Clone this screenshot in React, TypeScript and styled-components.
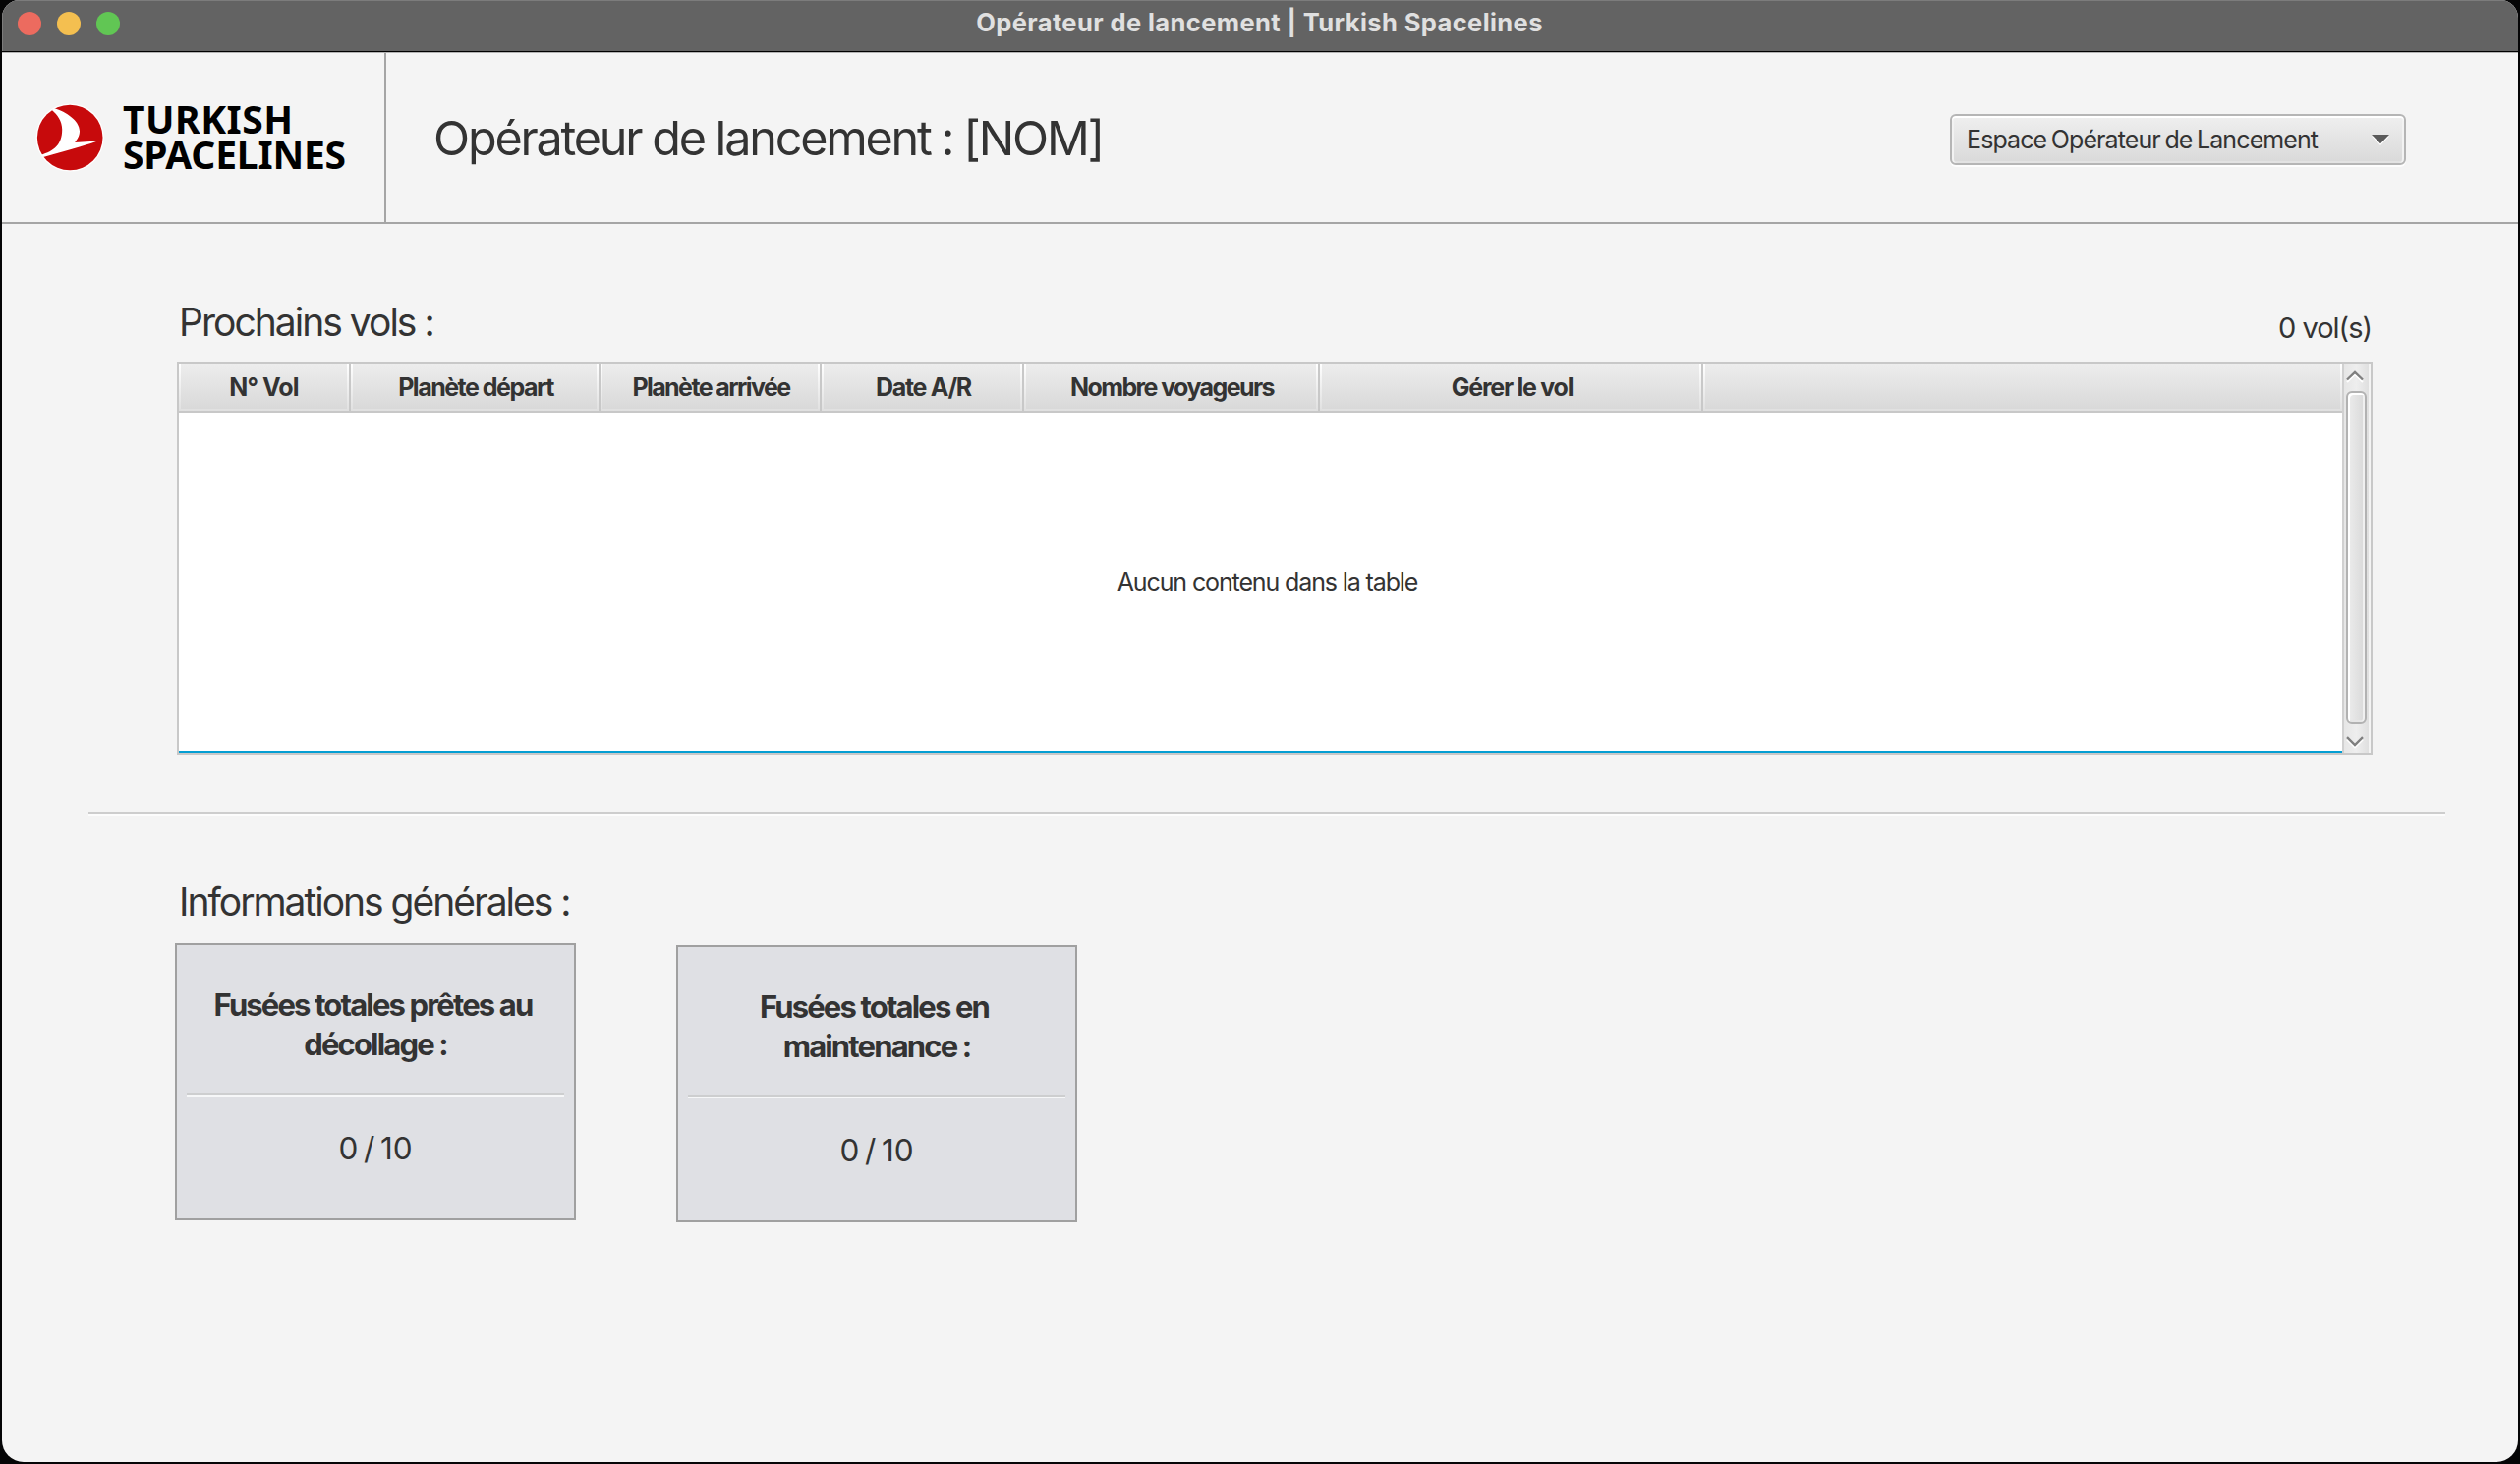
import React from "react";
import styled, { createGlobalStyle } from "styled-components";

const GlobalStyle = createGlobalStyle`
  * { box-sizing: border-box; }
  html, body { margin: 0; padding: 0; background: #050506; overflow: hidden; }
  body { font-family: Inter, "Liberation Sans", sans-serif; color: #333333; }
`;

const Desktop = styled.div`
  width: 2564px;
  height: 1490px;
  padding: 0 2px 2px;
  background: #050506;
`;

const Window = styled.div`
  display: flex;
  flex-direction: column;
  height: 1488px;
  border-radius: 18px 18px 22px 22px;
  overflow: hidden;
  background: #f4f4f4;
`;

const TitleBar = styled.div`
  display: grid;
  grid-template-columns: 1fr auto 1fr;
  height: 54px;
  padding: 0 17px 0 16px;
  background: #636363;
  border-bottom: 1px solid #b4b4b4;
  box-shadow: inset 0 -1px 0 #000, inset 1px 1px 0 #7c7c7c;
`;

const Lights = styled.div`
  display: flex;
  gap: 16px;
  padding-top: 12px;
`;

const Light = styled.span<{ $color: string }>`
  width: 24px;
  height: 24px;
  border-radius: 50%;
  background: ${(p) => p.$color};
`;

const WindowTitle = styled.div`
  font-size: 25.5px;
  font-weight: 700;
  line-height: 46px;
  letter-spacing: 0.4px;
  color: #e0e0e0;
  white-space: nowrap;
`;

const Header = styled.header`
  display: flex;
  height: 174px;
  border-bottom: 2px solid #a5a5a5;
`;

const Brand = styled.div`
  display: flex;
  align-items: center;
  gap: 19px;
  width: 391px;
  padding-left: 34px;
  border-right: 2px solid #a5a5a5;
`;

const BrandMark = styled.svg`
  flex: none;
  width: 70px;
  height: 70px;
`;

const BrandName = styled.div`
  display: flex;
  flex-direction: column;
  padding-bottom: 3px;
  font-family: "Noto Sans", "Open Sans", sans-serif;
  font-size: 39px;
  font-weight: 700;
  line-height: 36px;
  color: #000;
`;

const BrandLine = styled.span<{ $tracking: number }>`
  letter-spacing: ${(p) => p.$tracking}px;
`;

const PageTitle = styled.h1`
  flex: 1;
  margin: 0;
  padding: 1px 0 0 48px;
  font-size: 48.5px;
  font-weight: 400;
  line-height: 172px;
  letter-spacing: -2.2px;
  word-spacing: -0.6px;
  white-space: nowrap;
`;

const ComboBox = styled.button`
  display: flex;
  align-items: center;
  justify-content: space-between;
  width: 464px;
  height: 52px;
  margin: 62px 114px 0 0;
  padding: 1px 15px 1px 15px;
  border: 2px solid #b5b5b5;
  border-radius: 6px;
  background: linear-gradient(#efefef, #d9d9d9);
  box-shadow: inset 0 2px 0 #ffffff, inset 2px 0 0 #f2f2f2, inset -2px 0 0 #f2f2f2,
    inset 0 -2px 0 #e2e2e2, 0 2px 0 #fdfdfd;
  font-family: inherit;
  font-size: 25px;
  letter-spacing: -0.9px;
  word-spacing: -1.6px;
  color: #333333;
  white-space: nowrap;
`;

const ComboArrow = styled.svg`
  width: 18px;
  height: 12px;
`;

const Content = styled.main`
  display: flex;
  flex-direction: column;
  padding: 0 148px 0 178px;
`;

const SectionHead = styled.div<{ $height: number }>`
  display: flex;
  align-items: flex-end;
  justify-content: space-between;
  height: ${(p) => p.$height}px;
  padding: 0 1px 0 2px;
`;

const SectionTitle = styled.h2<{ $line: number; $tracking: number }>`
  margin: 0;
  font-size: 39px;
  font-weight: 400;
  line-height: ${(p) => p.$line}px;
  letter-spacing: ${(p) => p.$tracking}px;
  white-space: nowrap;
`;

const FlightCount = styled.span`
  font-size: 29px;
  line-height: 69px;
  letter-spacing: -1.01px;
`;

const Table = styled.div`
  display: flex;
  width: 2234px;
  height: 400px;
  border: 2px solid #c8c8c8;
  background: #ffffff;
`;

const TableMain = styled.div`
  display: flex;
  flex: 1;
  flex-direction: column;
  border-bottom: 2px solid #039ed3;
`;

const TableHead = styled.div`
  display: flex;
  height: 50px;
  border-bottom: 2px solid #c8c8c8;
`;

const HeadCell = styled.div<{ $width?: number; $tracking?: number }>`
  ${(p) => (p.$width ? `flex: none; width: ${p.$width}px;` : "flex: 1;")}
  display: flex;
  border-right: ${(p) => (p.$width ? "2px solid #c8c8c8" : "none")};
  letter-spacing: ${(p) => p.$tracking ?? 0}px;
`;

const HeadLabel = styled.div<{ $shift?: number }>`
  flex: 1;
  padding-left: ${(p) => p.$shift ?? 0}px;
  border: 2px solid transparent;
  border-top: none;
  background: linear-gradient(#ededed, #d9d9d9) padding-box,
    linear-gradient(#ffffff, #e0e0e0) border-box;
  font-size: 25px;
  font-weight: 700;
  line-height: 48px;
  text-align: center;
  white-space: nowrap;
`;

const Placeholder = styled.div`
  display: flex;
  flex: 1;
  align-items: center;
  justify-content: center;
  padding-left: 14px;
  font-size: 25px;
  letter-spacing: -1.12px;
`;

const ScrollBar = styled.div`
  display: flex;
  flex: none;
  flex-direction: column;
  align-items: flex-start;
  width: 29px;
  padding: 7px 0 4px 2px;
  border-left: 2px solid #d0d0d0;
  border-right: 2px solid #f4f4f4;
  background: linear-gradient(to right, #e6e6e6, #eeeeee 50%, #dfdfdf);
`;

const ScrollArrow = styled.svg`
  flex: none;
  width: 18px;
  height: 13px;
`;

const ScrollThumb = styled.div`
  flex: 1;
  width: 21px;
  margin: 8px 0 12px;
  border: 2px solid #b2b2b2;
  border-radius: 6px;
  background: linear-gradient(to right, #ececec, #d9d9d9);
  box-shadow: inset 2px 2px 0 #ffffff, inset -2px 0 0 #f0f0f0, inset 0 -2px 0 #e6e6e6;
`;

const Divider = styled.div`
  width: 2398px;
  height: 4px;
  margin: 58px 0 0 -90px;
  border-top: 2px solid #cdcdcd;
  border-bottom: 2px solid #fcfcfc;
`;

const Cards = styled.div`
  display: flex;
  gap: 102px;
  margin-left: -2px;
`;

const Card = styled.section<{ $drop: number }>`
  display: flex;
  flex-direction: column;
  width: 408px;
  height: 282px;
  margin-top: ${(p) => p.$drop}px;
  padding: 41px 10px 0;
  border: 2px solid #a0a0a0;
  background: #dfe0e4;
  text-align: center;
`;

const CardTitle = styled.h3`
  margin: 0;
  font-size: 31px;
  font-weight: 700;
  line-height: 40px;
  text-indent: -5px;
  letter-spacing: -1.84px;
`;

const CardRule = styled.div`
  height: 4px;
  margin-top: 29px;
  border-top: 2px solid #cdcecf;
  border-bottom: 2px solid #f6f7f8;
`;

const CardValue = styled.div`
  font-size: 31.5px;
  line-height: 106px;
  letter-spacing: 0;
  word-spacing: -3.2px;
`;

const columns = [
  { label: "N° Vol", width: 175, tracking: -0.9, shift: 0 },
  { label: "Planète départ", width: 254, tracking: -1.5, shift: 2 },
  { label: "Planète arrivée", width: 225, tracking: -1.59, shift: 2 },
  { label: "Date A/R", width: 206, tracking: -1.32, shift: 3 },
  { label: "Nombre voyageurs", width: 301, tracking: -1.6, shift: 2 },
  { label: "Gérer le vol", width: 390, tracking: -1.26, shift: 3 },
];

const cards = [
  { title: ["Fusées totales prêtes au", "décollage :"], value: "0 / 10", drop: 0 },
  { title: ["Fusées totales en", "maintenance :"], value: "0 / 10", drop: 2 },
];

export default function App() {
  return (
    <>
      <GlobalStyle />
      <Desktop>
        <Window>
          <TitleBar>
            <Lights>
              <Light $color="#ec6b5f" />
              <Light $color="#f4bf50" />
              <Light $color="#61c654" />
            </Lights>
            <WindowTitle>Opérateur de lancement | Turkish Spacelines</WindowTitle>
          </TitleBar>
          <Header>
            <Brand>
              <BrandMark viewBox="36 104.7 70 70">
                <circle cx="71.2" cy="139.7" r="34.6" fill="#fff" />
                <circle cx="71.2" cy="139.7" r="33.3" fill="#c70a0c" />
                <path
                  d="M55.5 110C67 113.5 81 122.5 81 133.3C81 138 78.5 142 76.2 144.6L99.4 143.2Q90 147 44 159.6L41.5 157.5C55 153.5 63.2 147 63.2 131.5C63.2 123 58.5 116.5 52.5 111.5Z"
                  fill="#fff"
                />
              </BrandMark>
              <BrandName>
                <BrandLine $tracking={0.53}>TURKISH</BrandLine>
                <BrandLine $tracking={-0.2}>SPACELINES</BrandLine>
              </BrandName>
            </Brand>
            <PageTitle>Opérateur de lancement : [NOM]</PageTitle>
            <ComboBox>
              Espace Opérateur de Lancement
              <ComboArrow viewBox="0 0 18 12">
                <path d="M0 2.5H18L9 12Z" fill="#fff" />
                <path d="M0 1H18L9 10.2Z" fill="#5a5a5a" />
              </ComboArrow>
            </ComboBox>
          </Header>
          <Content>
            <SectionHead $height={140}>
              <SectionTitle $line={80} $tracking={-1.98}>Prochains vols :</SectionTitle>
              <FlightCount>0 vol(s)</FlightCount>
            </SectionHead>
            <Table>
              <TableMain>
                <TableHead>
                  {columns.map((col) => (
                    <HeadCell key={col.label} $width={col.width} $tracking={col.tracking}>
                      <HeadLabel $shift={col.shift}>{col.label}</HeadLabel>
                    </HeadCell>
                  ))}
                  <HeadCell>
                    <HeadLabel />
                  </HeadCell>
                </TableHead>
                <Placeholder>Aucun contenu dans la table</Placeholder>
              </TableMain>
              <ScrollBar>
                <ScrollArrow viewBox="0 0 18 13">
                  <path d="M1 12L9 4L17 12" fill="none" stroke="#fff" strokeWidth="2" />
                  <path d="M1 9.5L9 1.8L17 9.5" fill="none" stroke="#808080" strokeWidth="2.4" />
                </ScrollArrow>
                <ScrollThumb />
                <ScrollArrow viewBox="0 0 18 13">
                  <path d="M1 3.5L9 11.4L17 3.5" fill="none" stroke="#fff" strokeWidth="2" />
                  <path d="M1 1.2L9 9L17 1.2" fill="none" stroke="#808080" strokeWidth="2.4" />
                </ScrollArrow>
              </ScrollBar>
            </Table>
            <Divider />
            <SectionHead $height={130}>
              <SectionTitle $line={84} $tracking={-2.01}>Informations générales :</SectionTitle>
            </SectionHead>
            <Cards>
              {cards.map((card) => (
                <Card key={card.title[1]} $drop={card.drop}>
                  <CardTitle>
                    {card.title[0]}
                    <br />
                    {card.title[1]}
                  </CardTitle>
                  <CardRule />
                  <CardValue>{card.value}</CardValue>
                </Card>
              ))}
            </Cards>
          </Content>
        </Window>
      </Desktop>
    </>
  );
}
